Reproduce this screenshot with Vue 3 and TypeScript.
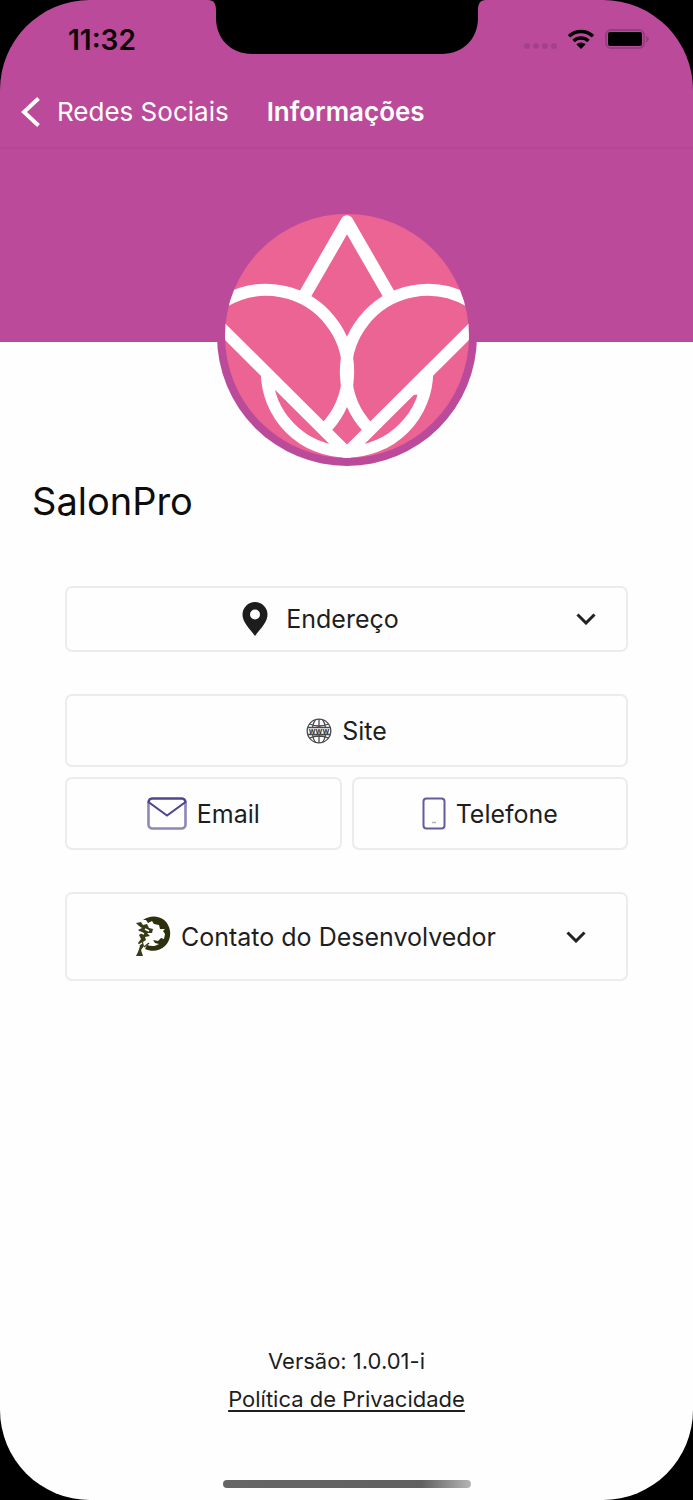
<script setup lang="ts">
import { ref } from 'vue'

const addressOpen = ref(false)
const developerOpen = ref(false)
const signalDots = [3, 12, 21, 30]
</script>

<template>
  <div class="stage">
    <div class="phone">
      <header class="top">
        <div class="status">
          <time class="clock">11:32</time>
          <svg class="notch" viewBox="0 0 278 56" aria-hidden="true">
            <path d="M0 0C6 0 8 4 8 10V18C8 38 22 54 45 54H233C256 54 270 38 270 18V10C270 4 272 0 278 0Z" fill="#000" />
          </svg>
          <div class="indicators">
            <svg class="dots" viewBox="0 0 33 8" aria-hidden="true">
              <circle v-for="x in signalDots" :key="x" :cx="x" cy="4" r="3" fill="#a3428a" />
            </svg>
            <svg class="wifi" viewBox="0 0 28 20" aria-hidden="true">
              <path d="M2 7.200A17.500 17.500 0 0 1 26 7.200" fill="none" stroke="#000" stroke-width="3.600" />
              <path d="M6.500 12A11 11 0 0 1 21.500 12" fill="none" stroke="#000" stroke-width="3.400" />
              <path d="M14 20L9.300 15.300A6.800 6.800 0 0 1 18.700 15.300Z" fill="#000" />
            </svg>
            <svg class="battery" viewBox="0 0 44 20" aria-hidden="true">
              <rect x="1" y="1" width="38" height="18" rx="5" fill="none" stroke="#9a3c82" stroke-width="2" />
              <rect x="3" y="3" width="34" height="14" rx="2" fill="#000" />
              <path d="M41 6.500Q44 8 44 10T41 13.500Z" fill="#9a3c82" />
            </svg>
          </div>
        </div>
        <nav class="navbar">
          <a class="back" href="#">
            <svg class="back-icon" viewBox="0 0 20 32" aria-hidden="true">
              <path d="M17.500 2.500L3 16L17.500 29.500" fill="none" stroke="#fff" stroke-width="4" />
            </svg>
            Redes Sociais
          </a>
          <h1 class="title">Informações</h1>
        </nav>
      </header>

      <div class="hero">
        <div class="avatar">
          <svg class="logo" viewBox="74 41 730 730" role="img" aria-label="SalonPro">
            <defs>
              <clipPath id="disc"><circle cx="439" cy="406" r="365" /></clipPath>
            </defs>
            <g clip-path="url(#disc)">
              <rect x="74" y="41" width="730" height="730" fill="#ec6493" />
              <g fill="none" stroke="#fff" stroke-width="36">
                <path d="M311 286L439 64L567 286" stroke-width="38" stroke-linejoin="round" />
                <path d="M75 301A245 245 0 0 1 375 682" />
                <path d="M803 301A245 245 0 0 0 503 682" />
                <path d="M60 379L439 756L818 379" />
                <path d="M199 512A240 240 0 0 0 679 512" />
                <path d="M637 574L662 574" stroke-width="16" />
              </g>
            </g>
          </svg>
        </div>
      </div>

      <main class="content">
        <h2 class="name">SalonPro</h2>
        <div class="actions">
          <button class="card address" type="button" :aria-expanded="addressOpen" @click="addressOpen = !addressOpen">
            <span class="label wide">
              <svg class="pin" viewBox="0 0 26 34" aria-hidden="true">
                <path d="M13 0A12.500 12.500 0 0 0 .500 12.500C.500 20 7 26 13 34C19 26 25.500 20 25.500 12.500A12.500 12.500 0 0 0 13 0ZM13 7.500A5 5 0 1 1 13 17.500A5 5 0 0 1 13 7.500Z" fill="#1d1d1d" fill-rule="evenodd" />
              </svg>
              Endereço
            </span>
            <svg class="chevron" viewBox="0 0 20 12" aria-hidden="true">
              <path d="M1.500 1.500L10 10L18.500 1.500" fill="none" stroke="#222" stroke-width="3" />
            </svg>
          </button>

          <div class="links">
            <a class="card site" href="#">
              <svg class="globe" viewBox="0 0 26 26" aria-hidden="true">
                <g fill="none" stroke="#4a4a4a" stroke-width="1.300">
                  <circle cx="13" cy="13" r="11.800" />
                  <path d="M13 1V9M13 17V25M3.500 6Q13 10 22.500 6M3.500 20Q13 16 22.500 20M1.500 9.500H24.500M1.500 16.500H24.500" />
                  <path d="M9.500 1.700Q7 5 6.500 9.500M16.500 1.700Q19 5 19.500 9.500M6.500 16.500Q7 21 9.500 24.300M19.500 16.500Q19 21 16.500 24.300" />
                </g>
                <text x="13" y="15.500" text-anchor="middle" class="www">www</text>
              </svg>
              Site
            </a>
            <a class="card" href="#">
              <svg class="mail" viewBox="0 0 40 33" aria-hidden="true">
                <rect x="1.500" y="1.500" width="37" height="30" rx="4" fill="none" stroke="#8f86b8" stroke-width="2.600" />
                <path d="M1.500 5Q2 1.500 5 1.500H35Q38 1.500 38.500 5L20 18.500Z" fill="none" stroke="#4f4490" stroke-width="2" />
              </svg>
              Email
            </a>
            <a class="card" href="#">
              <svg class="mobile" viewBox="0 0 24 33" aria-hidden="true">
                <rect x="1.500" y="1.500" width="21" height="30" rx="3" fill="none" stroke="#655b9c" stroke-width="2" />
                <path d="M10 25.500H14" stroke="#b5b5b5" stroke-width="1.500" />
              </svg>
              Telefone
            </a>
          </div>

          <button class="card developer" type="button" :aria-expanded="developerOpen" @click="developerOpen = !developerOpen">
            <span class="label">
              <svg class="tree" viewBox="0 0 36 42" aria-hidden="true">
                <path d="M8 4C17-3 33 0 35 15C37 29 23 39 10 33L12 29C17 31 21 30 24 28L20 27L18 24L23 25L26 22L29 23L30 18L28 15L30 13L25 13L24 9L19 8L17 5L13 7L11 4Z" fill="#2e2f0c" />
                <path d="M1 7L6 6L8 9L12 8L14 12L18 13L17 17L12 17L15 20L10 21L11 24L8 26L9 30L6 34L8 40H1L3 36L5 30L3 27L6 23L4 19L7 17L3 14L7 12L4 10Z" fill="#393b18" />
                <path d="M10 13L14 15M5 16L9 18M4 29L7 27M1 11H4M18 19L21 17" stroke="#fff" stroke-width="1.500" />
                <path d="M9 31L14 27" fill="none" stroke="#393b18" stroke-width="1.500" />
              </svg>
              Contato do Desenvolvedor
            </span>
            <svg class="chevron" viewBox="0 0 20 12" aria-hidden="true">
              <path d="M1.500 1.500L10 10L18.500 1.500" fill="none" stroke="#222" stroke-width="3" />
            </svg>
          </button>
        </div>
      </main>

      <footer class="footer">
        <p class="version">Versão: 1.0.01-i</p>
        <a class="policy" href="#">Política de Privacidade</a>
        <div class="home"></div>
      </footer>
    </div>
  </div>
</template>

<style>
body {
  background: #000;
}
</style>

<style scoped>
.stage {
  background: #000;
  font-family: Inter, "Liberation Sans", sans-serif;
  color: #1e1e1e;
}

.phone {
  display: flex;
  flex-direction: column;
  min-height: 100vh;
  overflow: hidden;
  border-radius: 90px;
}

svg {
  display: block;
  flex: none;
}

h1,
h2,
p {
  margin: 0;
}

a {
  color: inherit;
  text-decoration: none;
}

.top {
  background: #bb4b9a;
  border-bottom: 2px solid #b24792;
}

.status {
  display: grid;
  grid-template-columns: 1fr 278px 1fr;
  height: 76px;
}

.clock {
  padding-left: 68px;
  font-size: 28px;
  font-weight: 600;
  line-height: 80px;
  color: #0c0309;
}

.notch {
  width: 278px;
  height: 56px;
}

.indicators {
  display: flex;
  align-items: center;
  justify-content: flex-end;
  gap: 10px;
  height: 78px;
  padding-right: 44px;
}

.dots {
  width: 33px;
  height: 8px;
  margin-top: 14px;
}

.wifi {
  width: 28px;
  height: 20px;
}

.battery {
  width: 44px;
  height: 20px;
}

.navbar {
  display: flex;
  align-items: center;
  gap: 38px;
  height: 71px;
  padding: 0 21px;
  color: #fff;
}

.back {
  display: flex;
  align-items: center;
  gap: 16px;
  font-size: 26px;
  line-height: 32px;
}

.back-icon {
  width: 20px;
  height: 32px;
}

.title {
  font-size: 26px;
  font-weight: 600;
  line-height: 32px;
}

.hero {
  position: relative;
  z-index: 1;
  display: flex;
  justify-content: center;
  height: 193px;
  padding-top: 57px;
  box-sizing: border-box;
  background: #bb4b9a;
}

.avatar {
  display: flex;
  flex: none;
  justify-content: center;
  box-sizing: border-box;
  width: 260px;
  height: 260px;
  padding-top: 8px;
  border-radius: 50%;
  background: #bb4b9a;
}

.logo {
  width: 244px;
  height: 244px;
}

.content {
  flex: 1;
  background: #fefefe;
}

.name {
  padding: 134px 32px 0;
  font-size: 38px;
  font-weight: 400;
  line-height: 50px;
  color: #0d0d0d;
}

.actions {
  display: flex;
  flex-direction: column;
  gap: 42px;
  padding: 60px 65px 0;
}

.card {
  display: flex;
  align-items: center;
  justify-content: center;
  gap: 10px;
  box-sizing: border-box;
  width: 100%;
  height: 73px;
  border: 2px solid #ececec;
  border-radius: 7px;
  background: #fefefe;
  font-family: inherit;
  font-size: 25px;
  line-height: 32px;
  color: #1e1e1e;
}

.address {
  height: 66px;
  padding: 0 30px 0 0;
}

.developer {
  height: 89px;
  padding: 0 40px 0 0;
}

.label {
  display: flex;
  flex: 1;
  align-items: center;
  justify-content: center;
  gap: 10px;
  padding-left: 8px;
}

.wide {
  gap: 18px;
}

.links {
  display: grid;
  grid-template-columns: 1fr 1fr;
  gap: 10px;
}

.site {
  grid-column: 1 / -1;
}

.pin {
  width: 26px;
  height: 34px;
}

.chevron {
  width: 20px;
  height: 12px;
}

.globe {
  width: 26px;
  height: 26px;
}

.www {
  font-size: 8px;
  font-weight: 700;
  fill: #3a3a3a;
}

.mail {
  width: 40px;
  height: 33px;
}

.mobile {
  width: 24px;
  height: 33px;
}

.tree {
  width: 36px;
  height: 42px;
}

.footer {
  display: flex;
  flex-direction: column;
  align-items: center;
  padding: 40px 0 12px;
  background: #fefefe;
  font-size: 22px;
  line-height: 38px;
}

.policy {
  text-decoration: underline;
  text-decoration-thickness: 2px;
  text-underline-offset: 3px;
}

.home {
  width: 248px;
  height: 8px;
  margin-top: 62px;
  border-radius: 4px;
  background: linear-gradient(to right, #666 0%, #606060 80%, #b5b5b5 100%);
}
</style>
